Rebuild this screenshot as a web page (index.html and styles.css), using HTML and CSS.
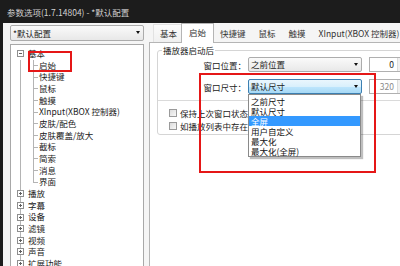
FILE: index.html
```html
<!DOCTYPE html>
<html lang="zh-CN">
<head>
    <meta charset="UTF-8">
    <title>参数选项</title>
    <link rel="stylesheet" href="styles.css">
</head>
<body>
    <div class="titlebar">参数选项(1.7.14804) - *默认配置</div>

    <div class="window">
        <aside class="sidebar">
            <div class="combo profile">*默认配置<span class="caret"></span></div>
            <ul class="tree">
                <li class="node top first"><span class="box minus"></span>基本</li>
                <li class="node child">启始</li>
                <li class="node child">快捷键</li>
                <li class="node child">鼠标</li>
                <li class="node child">触摸</li>
                <li class="node child">XInput(XBOX 控制器)</li>
                <li class="node child">皮肤/配色</li>
                <li class="node child">皮肤覆盖/放大</li>
                <li class="node child">截标</li>
                <li class="node child">简索</li>
                <li class="node child">消息</li>
                <li class="node child last">界面</li>
                <li class="node top"><span class="box plus"></span>播放</li>
                <li class="node top"><span class="box plus"></span>字幕</li>
                <li class="node top"><span class="box plus"></span>设备</li>
                <li class="node top"><span class="box plus"></span>滤镜</li>
                <li class="node top"><span class="box plus"></span>视频</li>
                <li class="node top"><span class="box plus"></span>声音</li>
                <li class="node top"><span class="box plus"></span>扩展功能</li>
            </ul>
        </aside>

        <main class="prefs">
            <nav class="tabs">
                <span class="tab">基本</span>
                <span class="tab active">启始</span>
                <span class="tab">快捷键</span>
                <span class="tab">鼠标</span>
                <span class="tab">触摸</span>
                <span class="tab">XInput(XBOX 控制器)</span>
            </nav>
            <section class="panel">
                <fieldset class="group">
                    <legend>播放器启动后</legend>
                    <div class="field first">
                        <label>窗口位置：</label>
                        <div class="combo">之前位置<span class="caret"></span></div>
                        <div class="spin"><span class="val">0</span><span class="arrows"><i class="up"></i><i class="down"></i></span></div>
                    </div>
                    <div class="field">
                        <label>窗口尺寸：</label>
                        <div class="combo open">默认尺寸<span class="caret"></span>
                            <ul class="dropdown">
                                <li>之前尺寸</li>
                                <li>默认尺寸</li>
                                <li class="sel">全屏</li>
                                <li>用户自定义</li>
                                <li>最大化</li>
                                <li>最大化(全屏)</li>
                            </ul>
                        </div>
                        <div class="spin disabled"><span class="val">320</span><span class="arrows"><i class="up"></i><i class="down"></i></span></div>
                    </div>
                    <div class="sep"></div>
                    <div class="check first"><span class="cb"></span>保持上次窗口状态</div>
                    <div class="check"><span class="cb"></span>如播放列表中存在该文件则从该位置开始播放</div>
                </fieldset>
            </section>
        </main>
    </div>

    <div class="mark mark-tree"></div>
    <div class="mark mark-size"></div>
</body>
</html>
```

FILE: styles.css
```css
body {
    margin: 0;
    width: 400px;
    height: 266px;
    overflow: hidden;
    position: relative;
    background: #1c1c1c;
    font-family: "Noto Sans CJK SC", "Noto Sans", sans-serif;
    font-size: 8.5px;
    color: #222;
}
.titlebar {
    height: 23px;
    line-height: 24px;
    padding-left: 7px;
    color: #d0d0d0;
    font-size: 8.5px;
}
.window {
    display: flex;
    height: 243px;
    margin-left: 3px;
    background: #f5f5f5;
}

/* left side */
.sidebar {
    width: 134px;
    padding: 2px 0 0 7px;
    display: flex;
    flex-direction: column;
    gap: 3px;
    flex: none;
}
.combo {
    position: relative;
    height: 14px;
    line-height: 14px;
    padding-left: 2px;
    border: 1px solid #acacac;
    border-radius: 2px;
    background: linear-gradient(#fafafa, #e8e8e8);
}
.caret {
    position: absolute;
    right: 3px;
    top: 5px;
    width: 0;
    height: 0;
    border-left: 2.5px solid transparent;
    border-right: 2.5px solid transparent;
    border-top: 3px solid #111;
}
.tree {
    list-style: none;
    margin: 0;
    padding: 3px 0 0;
    flex: 1;
    background: #fff;
    border: 1px solid #a8a8a8;
    border-bottom: none;
}
.node {
    position: relative;
    display: flex;
    align-items: center;
    height: 11.67px;
    line-height: 11.67px;
    white-space: nowrap;
    background:
        linear-gradient(#b4b4b4, #b4b4b4) no-repeat 9px 0 / 1px 100%;
}
.node.first {
    background:
        linear-gradient(#b4b4b4, #b4b4b4) no-repeat 9px 50% / 1px 50%;
}
.node.top {
    padding-left: 6px;
}
.node.top .box {
    margin-right: 4px;
}
.node.child {
    padding-left: 28px;
    background:
        linear-gradient(#b4b4b4, #b4b4b4) no-repeat 9px 0 / 1px 100%,
        linear-gradient(#b4b4b4, #b4b4b4) no-repeat 22px 0 / 1px 100%,
        linear-gradient(#b4b4b4, #b4b4b4) no-repeat 22px 50% / 5px 1px;
}
.node.child.last {
    background:
        linear-gradient(#b4b4b4, #b4b4b4) no-repeat 9px 0 / 1px 100%,
        linear-gradient(#b4b4b4, #b4b4b4) no-repeat 22px 0 / 1px 50%,
        linear-gradient(#b4b4b4, #b4b4b4) no-repeat 22px 50% / 5px 1px;
}
.box {
    width: 5px;
    height: 5px;
    border: 1px solid #8f8f8f;
    background: linear-gradient(#606060, #606060) no-repeat 1px 2px / 3px 1px, #fff;
    flex: none;
}
.box.plus {
    background:
        linear-gradient(#606060, #606060) no-repeat 1px 2px / 3px 1px,
        linear-gradient(#606060, #606060) no-repeat 2px 1px / 1px 3px,
        #fff;
}

/* right side */
.prefs {
    flex: 1;
    margin-left: 5px;
    display: flex;
    flex-direction: column;
    min-width: 0;
}
.tabs {
    display: flex;
    align-items: flex-end;
    height: 18px;
    margin-top: 1px;
    padding-left: 4px;
    position: relative;
    z-index: 1;
}
.tab {
    height: 17px;
    line-height: 16px;
    padding: 0 6px;
    color: #333;
    white-space: nowrap;
    border: 1px solid transparent;
    border-bottom: none;
    margin-right: -1px;
}
.tab:first-child {
    border-color: #e2e2e2;
    background: linear-gradient(#fbfbfb, #f0f0f0);
}
.tab.active {
    height: 19px;
    margin: 0 -1px 0 -2px;
    padding: 0 7px;
    line-height: 17px;
    background: #fff;
    border-color: #b5b5b5;
    margin-bottom: -1px;
    position: relative;
}
.panel {
    flex: 1;
    background: #fff;
    border: 1px solid #b5b5b5;
    border-right: none;
    border-bottom: none;
    width: 300px;
}
.group {
    margin: 1px 0 0 7px;
    padding: 0 0 2px;
    width: 270px;
    border: 1px solid #d5d5d5;
    border-radius: 3px;
    min-width: 0;
}
.group legend {
    margin-left: 4px;
    padding: 0 1px;
    line-height: 13px;
    color: #222;
}
.field {
    display: flex;
    align-items: center;
    height: 15px;
    margin-top: 7px;
}
.field.first {
    margin-top: 0;
}
.field label {
    width: 88px;
    text-align: right;
    margin-right: 2px;
    white-space: nowrap;
}
.field .combo {
    width: 110px;
    height: 13px;
    line-height: 13px;
}
.combo.open {
    border-color: #3c7fb1;
    background: linear-gradient(#eaf6fd 0%, #d9f0fc 50%, #bee6fd 51%, #a7d9f5 100%);
}
.spin {
    display: flex;
    margin-left: 7px;
    height: 13px;
    border: 1px solid #b0b0b0;
    background: #fff;
}
.spin .val {
    width: 24px;
    text-align: right;
    padding-right: 3px;
    line-height: 13px;
}
.spin.disabled .val {
    color: #8a8a8a;
}
.arrows {
    width: 8px;
    display: flex;
    flex-direction: column;
    border-left: 1px solid #dcdcdc;
    background: #f0f0f0;
}
.arrows i {
    flex: 1;
    display: flex;
    align-items: center;
    justify-content: center;
}
.arrows .up::before,
.arrows .down::before {
    content: "";
    border-left: 2px solid transparent;
    border-right: 2px solid transparent;
}
.arrows .up::before {
    border-bottom: 2px solid #a0a0a0;
}
.arrows .down::before {
    border-top: 2px solid #a0a0a0;
}
.dropdown {
    position: absolute;
    z-index: 3;
    top: 14px;
    left: -1px;
    width: 111px;
    margin: 0;
    padding: 1px 0 0;
    list-style: none;
    background: #fff;
    border: 1px solid #8a8a8a;
    box-shadow: 2px 2px 1px rgba(0, 0, 0, 0.25);
}
.dropdown li {
    height: 10px;
    line-height: 10px;
    padding-left: 2px;
    color: #111;
}
.dropdown li.sel {
    background: #3399ff;
    color: #fff;
}
.sep {
    height: 1px;
    background: #dadada;
    margin-top: 6px;
}
.check {
    display: flex;
    align-items: center;
    height: 13px;
    padding-left: 11px;
    white-space: nowrap;
}
.check.first {
    margin-top: 5px;
}
.cb {
    width: 6px;
    height: 6px;
    margin-right: 3px;
    border: 1px solid #9a9a9a;
    background: linear-gradient(135deg, #dcdcdc, #f8f8f8);
    flex: none;
}

/* red annotation frames */
.mark {
    position: absolute;
    border: 2px solid #e51717;
    z-index: 5;
}
.mark-tree {
    left: 28px;
    top: 51px;
    width: 40px;
    height: 17px;
}
.mark-size {
    left: 199px;
    top: 73px;
    width: 173px;
    height: 96px;
}
```
